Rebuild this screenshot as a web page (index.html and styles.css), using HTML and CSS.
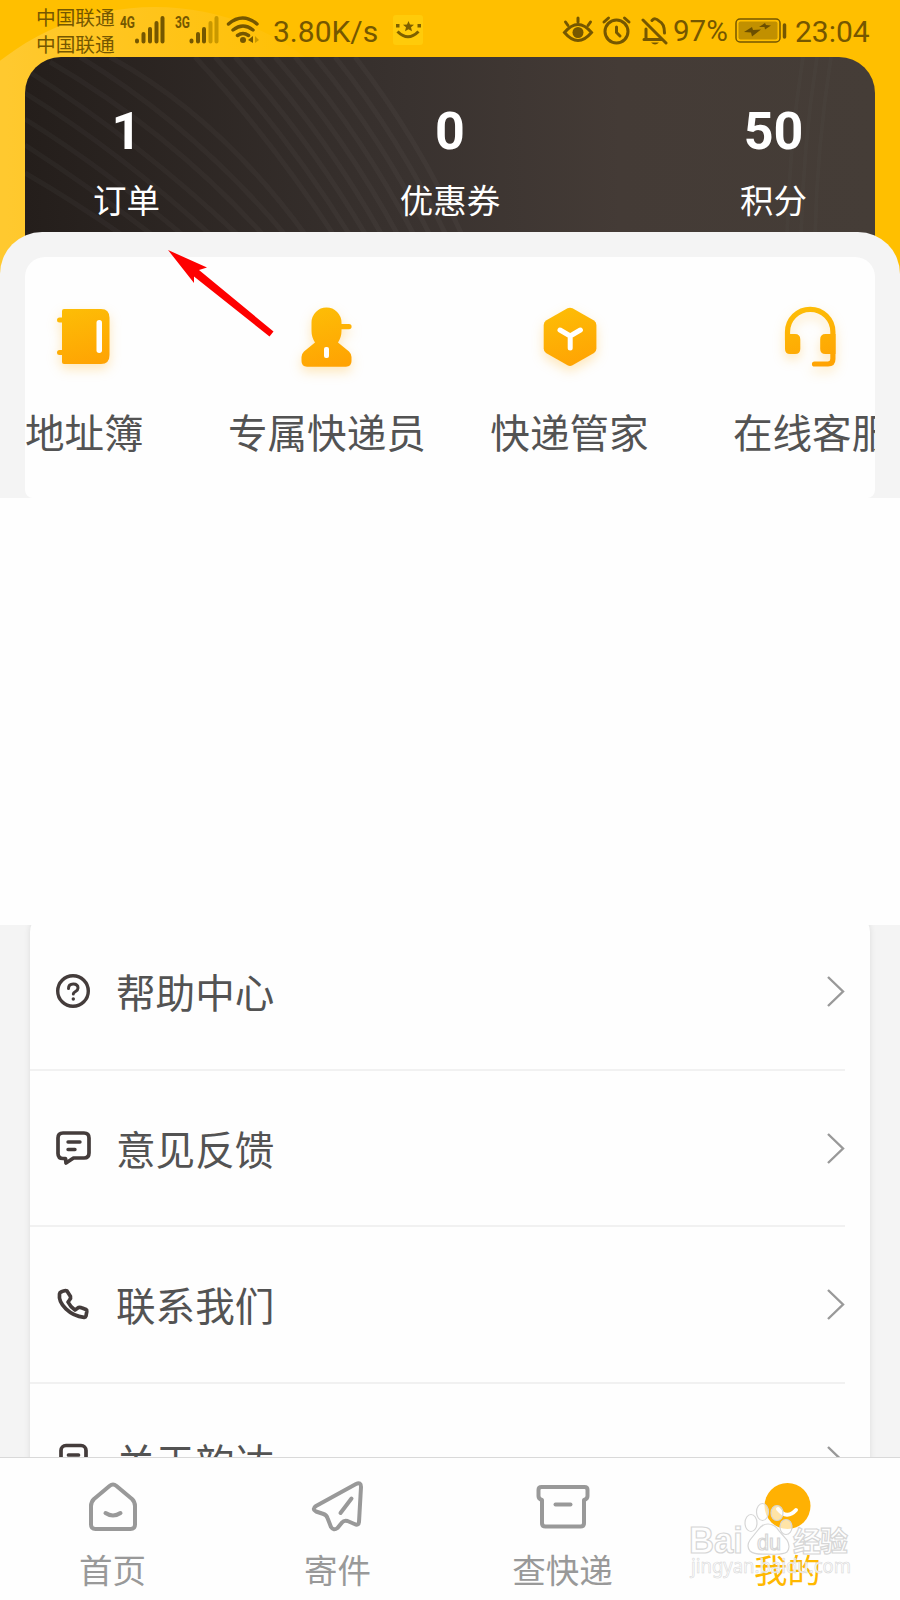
FILE: index.html
```html
<!DOCTYPE html>
<html lang="zh-CN">
<head>
	<meta charset="utf-8">
	<title>我的</title>
	<link rel="stylesheet" href="styles.css">
</head>
<body>
	<div class="top">
		<div class="circle"></div>
		<div class="status">
			<div class="carrier">中国联通<br>中国联通</div>
			<svg class="signal" width="142" height="57" viewBox="0 0 142 57">
				<g class="net">
					<text x="2" y="28" textLength="15" lengthAdjust="spacingAndGlyphs">4G</text>
					<text x="57" y="28" textLength="15" lengthAdjust="spacingAndGlyphs">3G</text>
				</g>
				<g stroke="#755700" stroke-width="4" stroke-linecap="round">
					<path d="M19 40.5v1M25.500 34v7.500M32 29v12.500M38.500 23v18.500M44.500 18v23.500"/>
					<path d="M73.500 40.500v1M80 34v7.500M86 29v12.500"/>
					<path stroke="#c99800" d="M92.500 23v18.500M98.500 18v23.500"/>
				</g>
				<g fill="none" stroke="#755700" stroke-width="3.500" stroke-linecap="round">
					<path d="M110.500 24q14-12 28.500 0M115 30q10-8 20 0M119.500 35.500q5.500-4 11 0"/>
				</g>
				<circle cx="125" cy="40" r="3" fill="#755700"/>
				<path d="M130 40l5-4v7z" fill="#755700"/>
				<path d="M141 40l-4-4v7z" fill="#c99800"/>
			</svg>
			<span class="speed">3.80K/s</span>
			<svg class="smile" width="30" height="30" viewBox="0 0 30 30">
				<rect width="30" height="30" rx="3" fill="#ffcb0a"/>
				<path d="M4.500 16.500q10.500 10.500 21 0" fill="none" stroke="#7d6000" stroke-width="3"/>
				<path d="M3 9h3.500v3.500H3zM24.500 9H28v3.500h-3.500z" fill="#7d6000"/>
				<path d="M15.500 6l1.500 3.500 4 .300-3 2.500 1 4-3.500-2-3.500 2 1-4-3-2.500 4-.300z" fill="#7d6000"/>
			</svg>
			<svg class="icons" width="106" height="32" viewBox="0 0 106 32">
				<g fill="none" stroke="#755700" stroke-width="3" stroke-linecap="round">
					<path d="M2.500 17.500Q16 1.500 29.500 17.500Q16 33.500 2.500 17.500z"/>
					<path d="M16 3v4M3.500 7l2.500 3.500M28.500 7L26 10.500"/>
					<circle cx="54.500" cy="16.500" r="11.500"/>
					<path d="M54.500 12v5.500l3.500 3.500M42 7l4.500-4M67 7l-4.500-4"/>
					<path d="M81 5l23 23M84 14v10.500h15M82 24.500h4M90 5.500q3-3.500 7 .500q5.500 2.500 5.500 12"/>
				</g>
				<circle cx="16" cy="17.500" r="5.500" fill="#755700"/>
				<path d="M89 27.500h8q-4 4-8 0z" fill="#755700"/>
			</svg>
			<span class="percent">97%</span>
			<svg class="battery" width="52" height="26" viewBox="0 0 52 26">
				<rect x="1" y="1" width="44" height="23" rx="4" fill="none" stroke="#755700" stroke-width="1.500"/>
				<rect x="3.500" y="3.500" width="39" height="18" rx="2" fill="#c19000"/>
				<path d="M9 14l8-5 1 3 8-.500-9 7-1-4zM24 9l6-4 1 2 5 .500-6 4-.500-2.500z" fill="#6b4f00"/>
				<path d="M49.500 7v12" stroke="#755700" stroke-width="3.500" stroke-linecap="round"/>
			</svg>
			<span class="clock">23:04</span>
		</div>
		<div class="card">
			<svg class="lines" width="850" height="180" viewBox="0 0 850 180">
				<g fill="none" stroke="#ffffff" stroke-opacity=".03" stroke-width="5">
					<path d="M85 0Q195 60 282 180M55 0Q170 70 262 180M25 5Q145 75 240 180M0 12Q115 85 215 180M0 36Q95 95 188 180M0 62Q80 112 160 180M0 88Q65 130 130 180M0 116Q50 145 100 180"/>
					<path d="M170 0Q245 80 310 180M190 0Q264 80 326 180M210 0Q283 80 342 180M230 0Q302 80 358 180M250 0Q320 80 374 180M270 0Q338 80 390 180M290 0Q356 80 406 180M310 0Q374 80 422 180M330 0Q392 80 438 180"/>
				</g>
				<path d="M778 0q-14 90-16 180M792 0q-14 90-16 180M806 0q-14 90-16 180" fill="none" stroke="#fff" stroke-opacity=".015" stroke-width="4"/>
			</svg>
			<div class="stat"><b>1</b><span>订单</span></div>
			<div class="stat"><b>0</b><span>优惠券</span></div>
			<div class="stat"><b>50</b><span>积分</span></div>
		</div>
	</div>

	<div class="sheet">
		<div class="services">
			<div class="service">
				<svg width="80" height="80" viewBox="0 0 80 80">
					<defs>
						<linearGradient id="gold" gradientUnits="userSpaceOnUse" x1="30" y1="17" x2="46" y2="77">
							<stop offset="0" stop-color="#fdbd06"/>
							<stop offset="1" stop-color="#ffa303"/>
						</linearGradient>
					</defs>
					<rect x="13" y="27.500" width="8" height="5" rx="2.500" fill="url(#gold)"/>
					<rect x="13" y="60" width="8" height="5" rx="2.500" fill="url(#gold)"/>
					<path d="M20 19H57Q65.500 19 65.500 28V65Q65.500 74 57 74H20Q18 74 18 72V21Q18 19 20 19z" fill="url(#gold)"/>
					<rect x="52.500" y="30" width="5.500" height="33" rx="2.700" fill="#fff"/>
				</svg>
				<span>地址簿</span>
			</div>
			<div class="service">
				<svg width="80" height="80" viewBox="0 0 80 80">
					<path d="M24.500 32.500a15 15 0 0 1 30 0V34H62a2.600 2.600 0 0 1 0 5.200H54.500V41Q54.500 47 51 52.500L62 61.500Q64.500 64 64.500 67V71Q64.500 76.700 59 76.700H20Q14.500 76.700 14.500 71V67Q14.500 64 17 61.500L28 52.500Q24.500 47 24.500 41z" fill="url(#gold)"/>
					<rect x="37" y="57" width="5" height="11" rx="2" fill="#fff"/>
				</svg>
				<span>专属快递员</span>
			</div>
			<div class="service">
				<svg width="80" height="80" viewBox="0 0 80 80">
					<path d="M38.500 18.300Q41 17 43.500 18.300L65 30.500Q67.400 32 67.400 35V58.500Q67.400 61.500 65 63L43.500 75.300Q41 76.600 38.500 75.300L17 63Q14.700 61.500 14.700 58.500V35Q14.700 32 17 30.500z" fill="url(#gold)"/>
					<path d="M31 40l10.200 6 10.200-6M41.200 46v12" fill="none" stroke="#fff" stroke-width="5" stroke-linecap="round" stroke-linejoin="round"/>
				</svg>
				<span>快递管家</span>
			</div>
			<div class="service">
				<svg width="80" height="80" viewBox="0 0 80 80">
					<path d="M15.500 50V42a22.700 22.700 0 0 1 45.400 0V69Q60.900 74 56 74H42.500" fill="none" stroke="url(#gold)" stroke-width="5.200" stroke-linecap="round"/>
					<path d="M13 44H23Q28.300 44 28.300 49.500V59Q28.300 64 23 64H18Q13 64 13 59zM63.500 44H53.500Q48.200 44 48.200 49.500V59Q48.200 64 53.500 64H63.500z" fill="url(#gold)"/>
				</svg>
				<span>在线客服</span>
			</div>
		</div>
	</div>

	<div class="blank"></div>

	<div class="menu">
		<div class="list">
			<div class="row">
				<svg width="36" height="36" viewBox="0 0 36 36" fill="none" stroke="#443c3b" stroke-width="3.400" stroke-linecap="round">
					<circle cx="18" cy="18" r="15.300"/>
					<path d="M13.500 15.500Q13.500 11 18.300 11Q23 11 23 15Q23 17 20.500 18.500Q18.300 19.800 18.300 21" stroke-width="3"/>
					<circle cx="18.300" cy="26" r="1.700" fill="#443c3b" stroke="none"/>
				</svg>
				<span>帮助中心</span>
				<svg class="arrow" width="18" height="31" viewBox="0 0 18 31"><path d="M1 1l15 14.500L1 30"/></svg>
			</div>
			<div class="row">
				<svg width="36" height="36" viewBox="0 0 36 36" fill="none" stroke="#443c3b" stroke-width="3.700" stroke-linecap="round" stroke-linejoin="round">
					<path d="M8 3H29Q34 3 34 8V23Q34 28 29 28H18.500L11 33L10.500 28.500H8Q3 28.500 3 23.500V8Q3 3 8 3z"/>
					<path d="M13 12h12M13 19.500h7" stroke-width="3.400"/>
				</svg>
				<span>意见反馈</span>
				<svg class="arrow" width="18" height="31" viewBox="0 0 18 31"><path d="M1 1l15 14.500L1 30"/></svg>
			</div>
			<div class="row">
				<svg width="36" height="36" viewBox="0 0 36 36" fill="none" stroke="#443c3b" stroke-width="3.700" stroke-linejoin="round">
					<path d="M6 5Q10 3 12 4L15.500 9.500Q16 11 14.500 13L13 15Q15.500 20 20 23L23.500 20.500Q25 20 26.500 20.700L31 22.500Q32 23 31.800 24.500L31 29Q30.500 30.500 29 30.300C15 29 3 17 4.500 7Q4.700 5.500 6 5z"/>
				</svg>
				<span>联系我们</span>
				<svg class="arrow" width="18" height="31" viewBox="0 0 18 31"><path d="M1 1l15 14.500L1 30"/></svg>
			</div>
			<div class="row">
				<svg width="36" height="36" viewBox="0 0 36 36" fill="none" stroke="#443c3b" stroke-width="3.700" stroke-linecap="round">
					<rect x="6" y="2.500" width="25" height="31" rx="5"/>
					<path d="M13.500 12h10M13.500 20h10"/>
				</svg>
				<span>关于韵达</span>
				<svg class="arrow" width="18" height="31" viewBox="0 0 18 31"><path d="M1 1l15 14.500L1 30"/></svg>
			</div>
		</div>
	</div>

	<div class="tabs">
		<div class="tab">
			<svg width="56" height="56" viewBox="0 0 56 56">
				<path d="M24.500 6Q28 3 31.500 6L47 19Q50 22 50 26V44.500Q50 49 45.500 49H10.500Q6 49 6 44.500V26Q6 22 9 19z"/>
				<path d="M20.500 33q7.500 5 15 0"/>
			</svg>
			<span>首页</span>
		</div>
		<div class="tab">
			<svg width="56" height="56" viewBox="0 0 56 56">
				<path d="M46 4Q51 1.500 51 7L49 42Q48.500 46 44.500 44L37.500 41Q34 40 32 42.500L27.500 48Q23.500 51 21 47L17.500 38Q16.500 35 13.500 34L6 31.500Q1.500 29 6 26z"/>
				<path d="M41.500 18.500L30.500 33"/>
			</svg>
			<span>寄件</span>
		</div>
		<div class="tab">
			<svg width="56" height="56" viewBox="0 0 56 56">
				<path d="M6.500 7H49.500Q52.500 7 52.500 10V16Q52.500 19 49 20V43Q49 46.500 45.500 46.500H10.500Q7 46.500 7 43V20Q3.500 19 3.500 16V10Q3.500 7 6.500 7z"/>
				<path d="M20.500 24.500h15"/>
			</svg>
			<span>查快递</span>
		</div>
		<div class="tab active">
			<svg width="56" height="56" viewBox="0 0 56 56">
				<circle cx="27.500" cy="26" r="23"/>
				<path d="M18 29q9 11 18 1"/>
			</svg>
			<span>我的</span>
		</div>
	</div>

	<svg class="pointer" width="110" height="90" viewBox="0 0 110 90">
		<path d="M0 0l39 17.500-8 2.500 74.500 61.500-4 5L26 26.500V33z" fill="#fe0000"/>
	</svg>

	<svg class="watermark" width="170" height="90" viewBox="0 0 170 90">
		<g fill="#fff" fill-opacity=".65" stroke="#d6d6d6" stroke-width="1.200">
			<ellipse cx="65" cy="28" rx="6" ry="8.500"/>
			<ellipse cx="76.500" cy="17" rx="6" ry="8.500"/>
			<ellipse cx="91" cy="18" rx="6" ry="7.500"/>
			<ellipse cx="100" cy="32" rx="6" ry="7.500"/>
			<path d="M82 29Q89 29 93 36L101 45Q105 52 101 57Q97 60 82 59Q68 60 64 56Q60 51 64 45L72 35Q76 29 82 29z"/>
			<text class="wm-big" x="3" y="58" textLength="54" lengthAdjust="spacingAndGlyphs">Bai</text>
			<text class="wm-du" x="71" y="55" textLength="24" lengthAdjust="spacingAndGlyphs">du</text>
			<text class="wm-cn" x="107" y="57" textLength="55">经验</text>
			<text class="wm-url" x="5" y="78" textLength="160" lengthAdjust="spacingAndGlyphs">jingyan.baidu.com</text>
		</g>
	</svg>
</body>
</html>
```

FILE: styles.css
```css
*{
	padding: 0;
	margin: 0;
	box-sizing: border-box;
}
body{
	position: relative;
	width: 900px;
	height: 1600px;
	overflow: hidden;
	background-color: #fefefe;
	color: #535353;
	font-family: Roboto, "Noto Sans CJK SC", sans-serif;
	white-space: nowrap;
}
svg{
	display: block;
	flex: none;
}
.top{
	position: relative;
	height: 290px;
	overflow: hidden;
	background-color: #ffbf00;
}
.circle{
	position: absolute;
	left: -95px;
	top: 7px;
	width: 500px;
	height: 500px;
	border-radius: 50%;
	background: linear-gradient(to right, #ffc92f 20%, #ffc41a 50%, #ffbf00 85%);
}
/* status bar */
.status{
	position: relative;
	display: flex;
	align-items: center;
	height: 57px;
	padding-left: 36px;
	color: #755700;
	font-size: 30px;
}
.carrier{
	width: 82px;
	padding-top: 3px;
	font-size: 19.7px;
	line-height: 27.5px;
	font-family: "Noto Sans CJK SC", sans-serif;
}
.net{
	fill: #755700;
	font-size: 17px;
	font-weight: bold;
}
.speed{
	width: 120px;
	margin-left: 13px;
	padding-top: 5px;
}
.smile{
	margin-top: 3px;
}
.icons{
	margin-left: 139px;
	margin-top: 5px;
}
.percent{
	width: 62px;
	margin-left: 5px;
	padding-top: 5px;
	font-size: 29.5px;
}
.battery{
	margin-top: 5px;
}
.clock{
	margin-left: 8px;
	padding-top: 5px;
}
/* dark card with counters */
.card{
	position: relative;
	display: flex;
	justify-content: space-between;
	height: 240px;
	margin: 0 25px;
	padding: 41px 68px 0 68px;
	border-radius: 36px 36px 0 0;
	overflow: hidden;
	background: linear-gradient(to right, #241e1b, #39322f 45%, #443b36 70%, #453d37);
	color: #fff;
}
.lines{
	position: absolute;
	left: 0;
	top: 0;
}
.stat{
	position: relative;
	display: flex;
	flex-direction: column;
	align-items: center;
}
.stat b{
	font-size: 52px;
	line-height: 68px;
}
.stat span{
	font-size: 33.5px;
	line-height: 72px;
}
/* services */
.sheet{
	position: relative;
	height: 266px;
	margin-top: -58px;
	padding: 25px 25px 0;
	border-radius: 42px 42px 0 0;
	background-color: #f4f4f4;
}
.services{
	display: flex;
	height: 241px;
	padding-top: 33px;
	border-radius: 20px 20px 8px 8px;
	overflow: hidden;
	background-color: #fefefe;
}
.service{
	display: flex;
	flex: none;
	flex-direction: column;
	align-items: center;
	width: 242.6px;
	font-size: 39.6px;
	line-height: 82px;
}
.service:first-child{
	margin-left: -62px;
}
.service svg{
	filter: drop-shadow(0 5px 6px rgba(255, 180, 30, .3));
}
.service span{
	margin-top: 24px;
}
.blank{
	height: 427px;
}
/* menu */
.menu{
	height: 532px;
	padding: 0 30px;
	overflow: hidden;
	background-color: #f4f4f4;
}
.list{
	margin-top: -11px;
	padding-right: 25px;
	border-radius: 18px;
	background-color: #fefefe;
	box-shadow: 0 0 6px rgba(0, 0, 0, .1);
}
.row{
	display: flex;
	align-items: center;
	height: 156.7px;
	padding-left: 25px;
	border-bottom: 2px solid #f1f1f1;
	font-size: 39.6px;
}
.row span{
	flex: 1;
	margin-top: -2px;
	margin-left: 25px;
}
.arrow{
	fill: none;
	stroke: #999;
	stroke-width: 2.4;
}
/* bottom tabs */
.tabs{
	position: relative;
	display: flex;
	height: 143px;
	border-top: 1px solid #d9d9d9;
	background-color: #fefefe;
}
.tab{
	display: flex;
	flex: 1;
	flex-direction: column;
	align-items: center;
	padding-top: 22px;
	color: #999;
	font-size: 33.5px;
	line-height: 62px;
}
.tab span{
	margin-top: 5px;
}
.tab svg{
	fill: none;
	stroke: #999;
	stroke-width: 4;
	stroke-linecap: round;
	stroke-linejoin: round;
}
.tab.active{
	color: #ffb800;
}
.active circle{
	fill: #ffb103;
	stroke: none;
}
.active path{
	stroke: #fff;
}
/* overlays */
.pointer{
	position: absolute;
	left: 168px;
	top: 250px;
}
.watermark{
	position: absolute;
	left: 686px;
	top: 1495px;
}
.wm-big{
	font: bold 37px "Liberation Sans", sans-serif;
}
.wm-du{
	font: 22px "Liberation Sans", sans-serif;
}
.wm-cn{
	font: bold 28px "Noto Sans CJK SC", sans-serif;
}
.wm-url{
	font: 20px "Noto Sans", sans-serif;
	fill-opacity: .9;
	stroke-width: .6px;
}
```
